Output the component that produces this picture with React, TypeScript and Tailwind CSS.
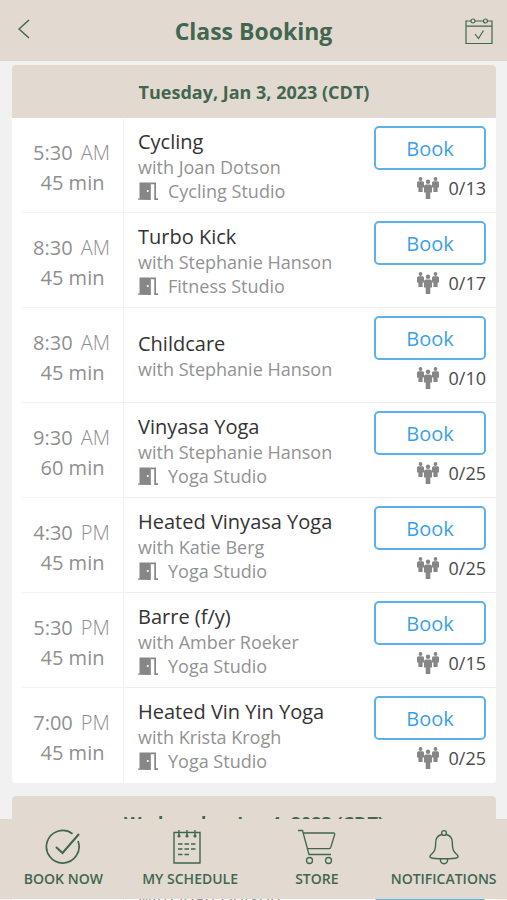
import type { ReactNode } from "react";

type GymClass = {
  time: string;
  period: string;
  length: string;
  title: string;
  coach: string;
  room?: string;
  spots: string;
};

type Day = { label: string; classes: GymClass[] };

const days: Day[] = [
  {
    label: "Tuesday, Jan 3, 2023 (CDT)",
    classes: [
      { time: "5:30", period: "AM", length: "45 min", title: "Cycling", coach: "Joan Dotson", room: "Cycling Studio", spots: "0/13" },
      { time: "8:30", period: "AM", length: "45 min", title: "Turbo Kick", coach: "Stephanie Hanson", room: "Fitness Studio", spots: "0/17" },
      { time: "8:30", period: "AM", length: "45 min", title: "Childcare", coach: "Stephanie Hanson", spots: "0/10" },
      { time: "9:30", period: "AM", length: "60 min", title: "Vinyasa Yoga", coach: "Stephanie Hanson", room: "Yoga Studio", spots: "0/25" },
      { time: "4:30", period: "PM", length: "45 min", title: "Heated Vinyasa Yoga", coach: "Katie Berg", room: "Yoga Studio", spots: "0/25" },
      { time: "5:30", period: "PM", length: "45 min", title: "Barre (f/y)", coach: "Amber Roeker", room: "Yoga Studio", spots: "0/15" },
      { time: "7:00", period: "PM", length: "45 min", title: "Heated Vin Yin Yoga", coach: "Krista Krogh", room: "Yoga Studio", spots: "0/25" },
    ],
  },
  {
    label: "Wednesday, Jan 4, 2023 (CDT)",
    classes: [
      { time: "5:30", period: "AM", length: "45 min", title: "Cycling", coach: "Joan Dotson", room: "Cycling Studio", spots: "0/13" },
    ],
  },
];

function BackIcon() {
  return (
    <svg width="12" height="20" viewBox="0 0 12 20" fill="none" stroke="currentColor" strokeWidth="1.5" aria-hidden="true">
      <path d="M11 1 1 10l10 9" />
    </svg>
  );
}

function CalendarIcon() {
  return (
    <svg width="28" height="28" viewBox="0 0 28 28" fill="none" stroke="currentColor" strokeWidth="1.2" aria-hidden="true">
      <path d="M5.800 4H1v22.500h26V4h-4.500M10 4h8.500M1 9.200h26M10 17l3.500 4.500L18.500 13.500" />
      <circle cx="8" cy="4" r="2" />
      <circle cx="20.500" cy="4" r="2" />
    </svg>
  );
}

function DoorIcon() {
  return (
    <svg width="20" height="18" viewBox="0 0 20 18" fill="#868686" aria-hidden="true">
      <path d="M0 16.500h1.500V0.500H12.800v17.500L0 17.800z" />
      <path d="M12.800 0.500H18v15.800h2V18h-3.700V2.300h-3.500z" />
      <circle cx="9.800" cy="9" r="1.100" fill="white" />
    </svg>
  );
}

function PeopleIcon() {
  return (
    <svg width="22" height="22" viewBox="0 0 22 22" fill="#868686" aria-hidden="true">
      <circle cx="3.500" cy="2" r="1.900" />
      <path d="M1.500 4.300h4q1.500 0 1.500 1.500v4.700H5.600v4.500H1.400v-4.500H0V5.800q0-1.500 1.500-1.500z" />
      <circle cx="18.500" cy="2" r="1.900" />
      <path d="M16.500 4.300h4q1.500 0 1.500 1.500v4.700h-1.400v4.500h-4.200v-4.500H15V5.800q0-1.500 1.500-1.500z" />
      <circle cx="11" cy="4.800" r="2.200" />
      <path d="M9 7.500h4q2 0 2 2v6h-1.700V22H8.700v-6.500H7v-6q0-2 2-2z" />
    </svg>
  );
}

function BookNowIcon() {
  return (
    <svg width="36" height="36" viewBox="0 0 36 36" fill="none" stroke="currentColor" aria-hidden="true">
      <path d="M27.500 4.700A16.300 16.300 0 1 0 33 12" strokeWidth="1.700" />
      <path d="m11 18 6.500 6L34 5" strokeWidth="2.100" />
    </svg>
  );
}

function ScheduleIcon() {
  return (
    <svg width="34" height="36" viewBox="0 0 34 36" fill="none" stroke="currentColor" strokeWidth="1.400" aria-hidden="true">
      <path d="M1 3.500h26V34H1zM6 1v5M14 1v5M22 1v5" />
      <g fill="currentColor" stroke="none">
        <circle cx="6" cy="7" r="1.600" />
        <circle cx="14" cy="7" r="1.600" />
        <circle cx="22" cy="7" r="1.600" />
      </g>
      <path d="M5 15h4.500m2 0H16m2 0h4.500M5 20h4.500m2 0H16m2 0h4.500M5 25.500h4.500m2 0H16" />
    </svg>
  );
}

function CartIcon() {
  return (
    <svg width="38" height="36" viewBox="0 0 38 36" fill="none" stroke="currentColor" strokeWidth="1.300" aria-hidden="true">
      <path d="M0 1.500h4.500L11 25.500h22M5.500 4h30q1.500 0 1.200 1.500l-4 13q-.5 1.200-1.700 1.200H9.500" />
      <circle cx="11.500" cy="31.500" r="3" />
      <circle cx="30.500" cy="31.500" r="3" />
    </svg>
  );
}

function BellIcon() {
  return (
    <svg width="30" height="36" viewBox="0 0 30 36" fill="none" stroke="currentColor" strokeWidth="1.400" strokeLinejoin="round" aria-hidden="true">
      <circle cx="15" cy="4" r="2.400" />
      <path d="M12.800 5.500C8.500 6.500 6.700 9.500 6.700 13.500c0 7-1.200 9.500-5 12.500-1.500 1.800-.7 3 2 3.200 7.500.8 15 .8 22.600 0 2.700-.2 3.500-1.400 2-3.200-3.800-3-5-5.500-5-12.500 0-4-1.800-7-6.100-8" />
      <path d="M11.500 29.800c-.5 3 1 5 3.500 5s4-2 3.500-5" />
    </svg>
  );
}

function ClassRow({ item }: { item: GymClass }) {
  return (
    <li className="group ml-2.5 flex min-h-[95px]">
      <div className="flex w-[102px] shrink-0 flex-col items-center justify-center border-r border-b border-[#eff3f3] pt-1.5 text-xl leading-[30px] text-[#8f8f8f] group-last:border-b-transparent">
        <p className="flex gap-2 pr-0.5">
          <span>{item.time}</span>
          <span className="font-light">{item.period}</span>
        </p>
        <p>{item.length}</p>
      </div>
      <div className="flex min-w-0 flex-1 border-b border-[#eeeff0] group-last:border-b-transparent">
        <div className="flex min-w-0 flex-1 flex-col justify-center pt-0.5 pl-3.5 text-lg leading-6 text-[#929292]">
          <h3 className="text-xl leading-[26px] whitespace-nowrap text-[#333]">{item.title}</h3>
          <p className="whitespace-nowrap">with {item.coach}</p>
          {item.room && (
            <p className="flex items-center gap-2.5 whitespace-nowrap">
              <DoorIcon />
              {item.room}
            </p>
          )}
        </div>
        <div className="mr-2.5 flex w-28 shrink-0 flex-col items-end gap-1.5 pt-2">
          <button className="h-11 w-full rounded-[5px] border-2 border-[#5ab2ec] bg-white pt-px text-xl text-[#3b9fe6]">Book</button>
          <p className="flex items-center gap-2.5 text-lg leading-6 text-[#4a4a4a]">
            <PeopleIcon />
            {item.spots}
          </p>
        </div>
      </div>
    </li>
  );
}

function NavItem({ label, children }: { label: string; children: ReactNode }) {
  return (
    <a href="#" className="flex flex-col items-center gap-1 text-sm leading-5 font-semibold whitespace-nowrap">
      {children}
      {label}
    </a>
  );
}

export default function App() {
  return (
    <div className="flex h-screen flex-col overflow-hidden bg-[#f1f1f1] font-['Open_Sans',sans-serif]">
      <header className="grid h-[61px] shrink-0 grid-cols-[1fr_auto_1fr] items-center bg-[#e2dad1] px-3.5 text-[#426650]">
        <button aria-label="Back" className="justify-self-start pb-1 pl-1">
          <BackIcon />
        </button>
        <h1 className="text-[23px] leading-8 font-bold">Class Booking</h1>
        <button aria-label="My calendar" className="justify-self-end">
          <CalendarIcon />
        </button>
      </header>

      <main className="flex min-h-0 flex-1 flex-col gap-[13px] overflow-hidden pt-1 pr-[11px] pl-3">
        {days.map((day) => (
          <section key={day.label} className="shrink-0 overflow-hidden rounded-[4px] bg-white">
            <h2 className="flex h-[53px] items-center justify-center bg-[#e2dad1] text-lg font-bold text-[#426650]">{day.label}</h2>
            <ul>
              {day.classes.map((item, i) => (
                <ClassRow key={i} item={item} />
              ))}
            </ul>
          </section>
        ))}
      </main>

      <nav className="fixed inset-x-0 bottom-px grid h-20 grid-cols-4 items-center bg-[#e2dad1] text-[#426650]">
        <NavItem label="BOOK NOW"><BookNowIcon /></NavItem>
        <NavItem label="MY SCHEDULE"><ScheduleIcon /></NavItem>
        <NavItem label="STORE"><CartIcon /></NavItem>
        <NavItem label="NOTIFICATIONS"><BellIcon /></NavItem>
      </nav>
    </div>
  );
}
